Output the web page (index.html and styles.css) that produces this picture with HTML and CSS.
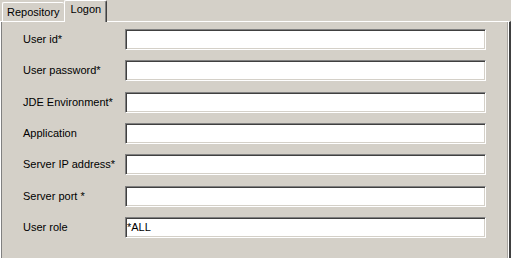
FILE: index.html
```html
<!DOCTYPE html>
<html>
<head>
<meta charset="utf-8">
<link rel="stylesheet" href="styles.css">
</head>
<body>
<div class="window">
  <div class="tabs">
    <div class="tab inactive">Repository</div>
    <div class="tab active">Logon</div>
  </div>
  <div class="panel">
    <div class="form">
      <label class="lbl">User id*</label><input class="field" type="text">
      <label class="lbl">User password*</label><input class="field" type="text">
      <label class="lbl">JDE Environment*</label><input class="field" type="text">
      <label class="lbl">Application</label><input class="field" type="text">
      <label class="lbl">Server IP address*</label><input class="field" type="text">
      <label class="lbl">Server port *</label><input class="field" type="text">
      <label class="lbl">User role</label><input class="field" type="text" value="*ALL">
    </div>
  </div>
</div>
</body>
</html>
```
FILE: styles.css
```css
html, body {
  margin: 0;
  padding: 0;
  background: #d4d0c8;
  font-family: "Liberation Sans", Arial, sans-serif;
  font-size: 11px;
  color: #000;
}
.window {
  width: 511px;
  height: 258px;
  overflow: hidden;
  display: flex;
  flex-direction: column;
}
.tabs {
  display: flex;
  align-items: flex-end;
  height: 21px;
  padding-left: 2px;
}
.tab {
  box-sizing: border-box;
  border-top: 1px solid #fff;
  border-left: 1px solid #fff;
  border-right: 1px solid #404040;
  box-shadow: inset -1px 0 #808080;
  border-radius: 2px 2px 0 0;
  background: #d4d0c8;
  white-space: nowrap;
}
.tab.inactive {
  height: 19px;
  padding: 3px 4px 0 4px;
  line-height: 13px;
  border-right: none;
  box-shadow: none;
}
.tab.active {
  height: 22px;
  margin-bottom: -1px;
  position: relative;
  z-index: 1;
  padding: 2px 5px 0 6px;
  line-height: 13px;
  border-left: 1px solid #fff;
}
.panel {
  flex: 1;
  border-top: 1px solid #fff;
  border-left: 1px solid #fff;
  border-right: 2px solid #404040;
  box-shadow: inset 1px 0 #808080, inset -1px 0 #fff, inset -2px 0 #a8a5a0;
  padding: 7px 0 0 22px;
}
.form {
  display: grid;
  grid-template-columns: 102px 361px;
  grid-auto-rows: 21px;
  row-gap: 10.33px;
  align-items: center;
}
.lbl {
  line-height: 13px;
}
.field {
  box-sizing: border-box;
  width: 361px;
  height: 21px;
  margin: 0;
  padding: 0 1px;
  border: 1px solid;
  border-color: #808080 #fff #fff #808080;
  box-shadow: inset 1px 1px #404040, inset -1px -1px #d4d0c8;
  background: #fff;
  font-family: "Liberation Sans", Arial, sans-serif;
  font-size: 11px;
  color: #000;
  outline: none;
}
```
